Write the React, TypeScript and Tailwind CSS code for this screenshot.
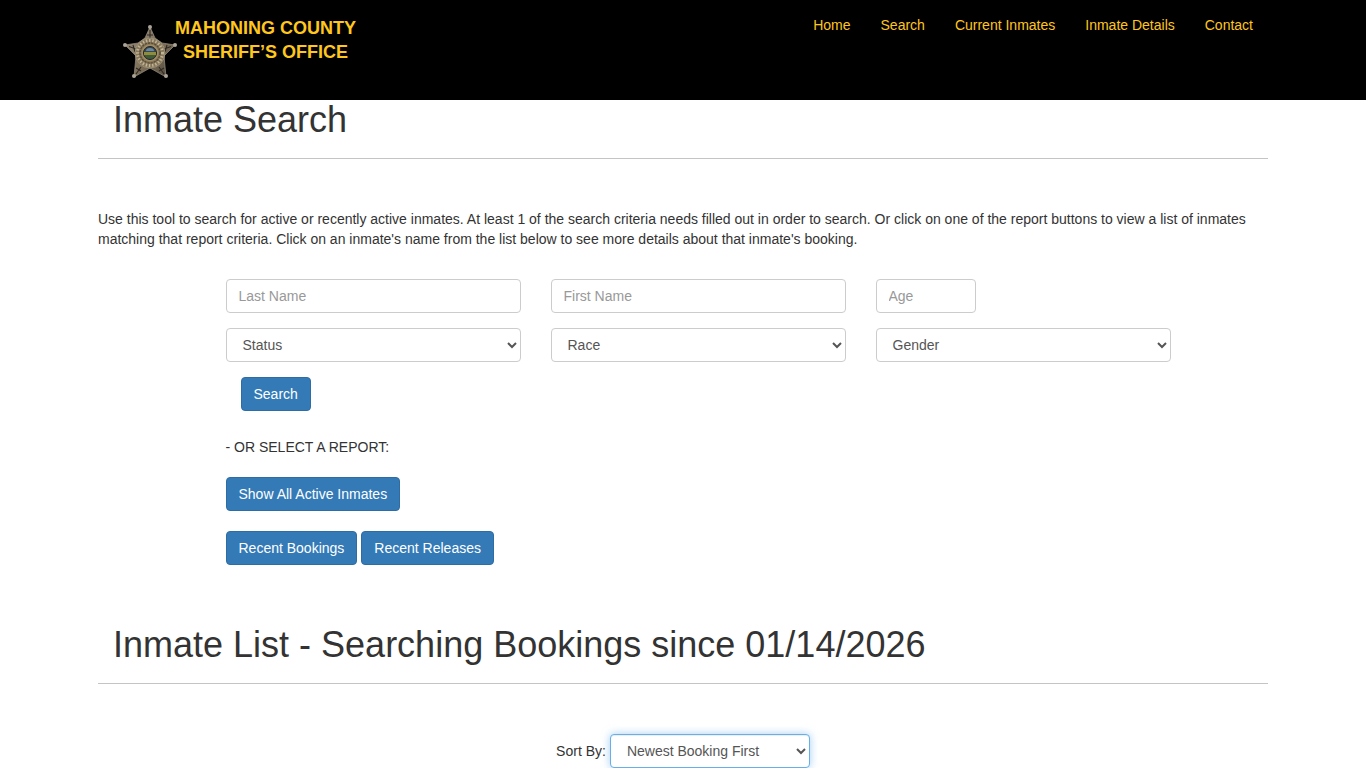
import { useState } from 'react'
import type { ReactNode } from 'react'

const NAV_LINKS = ['Home', 'Search', 'Current Inmates', 'Inmate Details', 'Contact']

const FILTERS = [
  { name: 'status', label: 'Status', options: ['Active', 'Released'] },
  { name: 'race', label: 'Race', options: ['Asian', 'Black', 'Hispanic', 'White', 'Other'] },
  { name: 'gender', label: 'Gender', options: ['Female', 'Male'] },
]

const CONTROL =
  'h-[34px] rounded-sm border bg-white px-3 text-sm text-[#555555] placeholder:text-[#999999] outline-none focus:border-[#66afe9]'

function Badge() {
  return (
    <svg viewBox="0 0 56 56" className="w-14 h-14 shrink-0" role="img" aria-label="Sheriff's badge">
      <defs>
        <linearGradient id="metal" x1="0" y1="0" x2="1" y2="1">
          <stop offset="0" stopColor="#9a8f80" />
          <stop offset="0.5" stopColor="#83745c" />
          <stop offset="1" stopColor="#4d463b" />
        </linearGradient>
      </defs>
      <path
        d="M28 3 L33 14 L40 19 L53 21 L42 32 L44 53 L28 44 L12 53 L14 32 L3 21 L16 19 L23 14 Z"
        fill="url(#metal)"
        stroke="#8f8779"
        strokeWidth="0.8"
        strokeLinejoin="round"
      />
      <path
        d="M28 6 V14 M7 22.5 L14 25 M49 22.5 L42 25 M14 50 L19 43 M42 50 L37 43 M25 11 L31 11 M11 21 L13 28 M45 21 L43 28 M14 44 L19 47 M42 44 L37 47"
        stroke="#2f2a23"
        strokeWidth="1.1"
      />
      <circle cx="28" cy="29" r="15" fill="#85765b" stroke="#a2977f" strokeWidth="0.8" />
      <circle cx="28" cy="29" r="12.5" fill="none" stroke="#c2b594" strokeWidth="3" strokeDasharray="1.4 1.8" />
      <circle cx="28" cy="29" r="10" fill="none" stroke="#5a4d37" strokeWidth="1.4" strokeDasharray="2.2 1" />
      <circle cx="28" cy="29" r="8.5" fill="#a08c62" />
      <circle cx="28" cy="29" r="6.5" fill="#34495a" stroke="#23241f" strokeWidth="1" />
      <path d="M22 28 H34 V31 H22 Z" fill="#8f8c3c" />
      <path d="M22.5 31 H33.5 A6 6 0 0 1 22.5 31 Z" fill="#3f5b35" />
      <path d="M24 27 A4 3 0 0 1 32 27 Z" fill="#6b8698" />
      {[[28, 3], [3, 21], [53, 21], [12, 52], [44, 52]].map(([x, y]) => (
        <circle key={`${x}-${y}`} cx={x} cy={y} r="2" fill="#aaa397" />
      ))}
    </svg>
  )
}

function Heading({ level, children }: { level: 1 | 2; children: ReactNode }) {
  const Tag = level === 1 ? 'h1' : 'h2'
  return (
    <div className="border-b border-[#c4c4c4] px-[15px] pb-[19px]">
      <Tag className="text-4xl leading-[39px] text-[#333333]">{children}</Tag>
    </div>
  )
}

function PrimaryButton({ type = 'button', children }: { type?: 'button' | 'submit'; children: ReactNode }) {
  return (
    <button
      type={type}
      className="h-[34px] rounded-sm border border-[#2e6da4] bg-[#337ab7] px-3 text-sm text-white cursor-pointer hover:bg-[#286090]"
    >
      {children}
    </button>
  )
}

export default function App() {
  const [sort, setSort] = useState('newest')

  return (
    <div className="bg-white font-['Liberation_Sans',Arial,sans-serif] text-sm text-[#333333]">
      <header className="bg-black h-[100px]">
        <div className="max-w-[1170px] mx-auto flex items-start justify-between">
          <a href="#" className="flex items-start pl-6 pt-4 text-[#ffc61e]">
            <span className="pt-2 -mr-[3px]">
              <Badge />
            </span>
            <span className="text-lg leading-6 font-bold text-center">
              MAHONING COUNTY
              <br />
              SHERIFF’S OFFICE
            </span>
          </a>
          <nav className="flex pt-[15px]">
            {NAV_LINKS.map(link => (
              <a key={link} href="#" className="px-[15px] leading-5 text-[#ffc61e] hover:underline">
                {link}
              </a>
            ))}
          </nav>
        </div>
      </header>

      <main className="max-w-[1170px] mx-auto">
        <Heading level={1}>Inmate Search</Heading>

        <p className="pt-[50px] leading-5">
          Use this tool to search for active or recently active inmates. At least 1 of the search criteria needs filled
          out in order to search. Or click on one of the report buttons to view a list of inmates matching that report
          criteria. Click on an inmate's name from the list below to see more details about that inmate's booking.
        </p>

        <div className="w-10/12 mx-auto pt-[30px] pl-[30px]">
          <form onSubmit={e => e.preventDefault()}>
            <div className="grid grid-cols-3 gap-x-[30px] gap-y-[15px]">
              <input aria-label="Last Name" placeholder="Last Name" className={`${CONTROL} border-[#cccccc] w-full`} />
              <input aria-label="First Name" placeholder="First Name" className={`${CONTROL} border-[#cccccc] w-full`} />
              <input aria-label="Age" placeholder="Age" className={`${CONTROL} border-[#cccccc] w-[100px]`} />
              {FILTERS.map(({ name, label, options }) => (
                <select key={name} name={name} aria-label={label} className={`${CONTROL} border-[#cccccc] w-full`}>
                  <option value="">{label}</option>
                  {options.map(o => (
                    <option key={o}>{o}</option>
                  ))}
                </select>
              ))}
            </div>
            <div className="pt-[15px] pl-[15px]">
              <PrimaryButton type="submit">Search</PrimaryButton>
            </div>
          </form>

          <p className="pt-[26px] pb-5 leading-5">- OR SELECT A REPORT:</p>
          <PrimaryButton>Show All Active Inmates</PrimaryButton>
          <div className="flex gap-1 pt-5 pb-[60px]">
            <PrimaryButton>Recent Bookings</PrimaryButton>
            <PrimaryButton>Recent Releases</PrimaryButton>
          </div>
        </div>

        <Heading level={2}>Inmate List - Searching Bookings since 01/14/2026</Heading>

        <div className="flex items-center justify-center gap-1 pt-[50px]">
          <label htmlFor="sort">Sort By:</label>
          <select
            id="sort"
            value={sort}
            onChange={e => setSort(e.target.value)}
            className={`${CONTROL} w-[200px] border-[#66afe9] shadow-[inset_0_1px_1px_rgba(0,0,0,0.075),0_0_8px_rgba(102,175,233,0.6)]`}
          >
            <option value="newest">Newest Booking First</option>
            <option value="oldest">Oldest Booking First</option>
            <option value="name">Last Name</option>
          </select>
        </div>
      </main>
    </div>
  )
}
